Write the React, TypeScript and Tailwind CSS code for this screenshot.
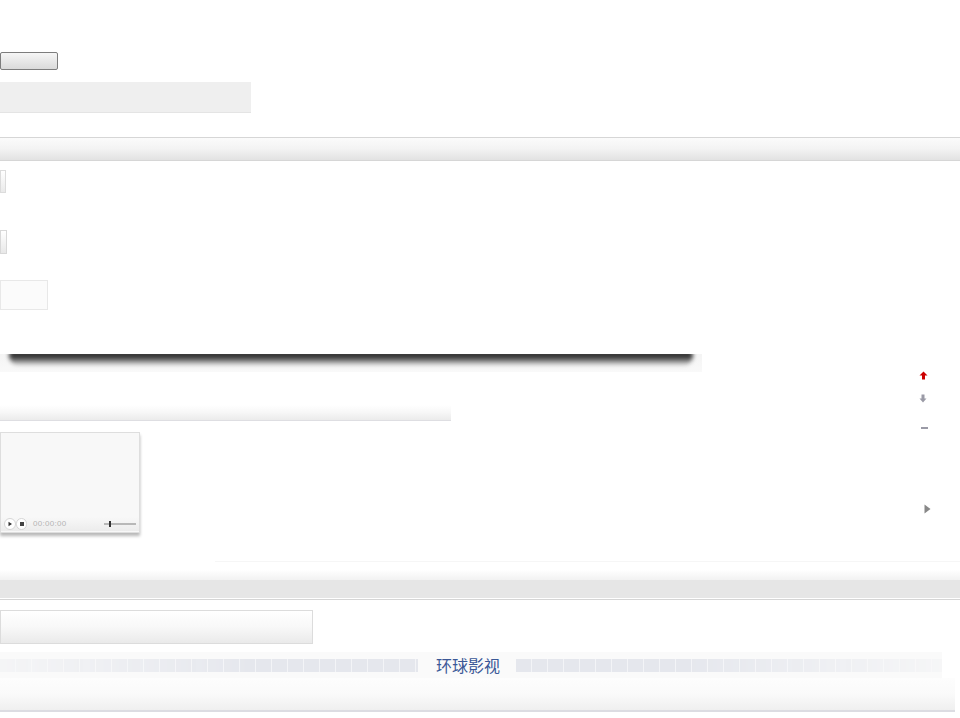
import React from "react";

function Squares({ fade, w }: { fade: "left" | "right"; w: string }) {
  return (
    <div
      className={
        "h-[13px] bg-[repeating-linear-gradient(90deg,#e5e7ed_0_15px,#f3f4f7_15px_16px)] " +
        w +
        " " +
        (fade === "left"
          ? "[mask-image:linear-gradient(90deg,rgba(0,0,0,0.25),#000_60%)]"
          : "[mask-image:linear-gradient(90deg,#000_40%,rgba(0,0,0,0.2))]")
      }
    />
  );
}

export default function App() {
  return (
    <div className="w-[960px] h-[718px] overflow-hidden bg-white font-['Liberation_Sans',sans-serif]">
      <div className="pt-[52px]">
        <div className="h-[18px] w-[58px] rounded-[2px] border border-[#7d7d7d] bg-gradient-to-b from-[#f6f6f6] to-[#dadada]" />
        <div className="mt-[12px] h-[31px] w-[251px] bg-[#efefef] border-b border-[#e4e4e4]" />
        <div className="mt-[24px] h-[24px] border-t border-b border-[#d6d6d6] bg-gradient-to-b from-[#fbfbfb] via-[#f3f3f3] to-[#e2e2e2]" />
        <div className="mt-[9px] h-[23px] w-[6px] border border-[#dcdcdc] bg-gradient-to-b from-[#ffffff] to-[#eaeaea]" />
        <div className="mt-[37px] h-[24px] w-[7px] border border-[#d8d8d8] bg-gradient-to-b from-[#ffffff] to-[#e8e8e8]" />
        <div className="mt-[26px] h-[30px] w-[48px] border border-[#e8e8e8] bg-[#fbfbfb]" />

        <div className="mt-[44px] flex">
          <div className="flex-1">
            <div className="h-[18px] w-[702px] bg-gradient-to-b from-[#f4f4f4] to-[#f9f9f9] overflow-hidden">
              <div className="mx-[9px] mt-[-3px] h-[15px] rounded-b-[12px] rounded-t-[4px] bg-gradient-to-b from-[#1a1a1a] via-[#444] via-45% to-transparent blur-[2px]" />
            </div>
            <div className="mt-[33px] h-[16px] w-[451px] bg-gradient-to-b from-[#ffffff] via-[#f7f7f7] to-[#ebebeb] border-b border-[#dedee2]" />
            <div className="mt-[11px] h-[101px] w-[140px] border border-[#dedede] bg-[#f8f8f8] shadow-[0_3px_3px_rgba(0,0,0,0.28)] flex flex-col justify-end">
              <div className="flex items-center h-[14px] mb-[1px] bg-gradient-to-b from-[#f8f8f8] to-[#ececec]">
                <div className="ml-[3px] w-[12px] h-[12px] rounded-full border border-[#d6d6d6] bg-white flex items-center justify-center">
                  <svg width="6" height="6" viewBox="0 0 6 6"><path d="M1.5 0.8 L5 3 L1.5 5.2 Z" fill="#333" /></svg>
                </div>
                <div className="w-[11px] h-[12px] rounded-full border border-[#d6d6d6] bg-white flex items-center justify-center">
                  <div className="w-[4px] h-[4px] bg-[#444]" />
                </div>
                <span className="ml-[6px] text-[8px] leading-none text-[#b4b4b4] tracking-[0.3px]">00:00:00</span>
                <div className="ml-auto mr-[3px] relative w-[32px] h-[6px] flex items-center">
                  <div className="w-full h-[2px] bg-[#b8b8b8]" />
                  <div className="absolute left-[5px] top-0 w-[2px] h-[6px] bg-[#333]" />
                </div>
              </div>
            </div>
          </div>
          <div className="w-[60px] relative">
            <div className="flex flex-col items-start pl-[19px] pt-[17px]">
              <svg width="9" height="9" viewBox="0 0 9 9"><path d="M4.5 0.5 L8.5 4.5 L6 4.5 L6 8.5 L3 8.5 L3 4.5 L0.5 4.5 Z" fill="#cc0000" /></svg>
              <svg className="mt-[14px]" width="8" height="9" viewBox="0 0 8 9"><path d="M2.5 0.5 L5.5 0.5 L5.5 4.5 L7.5 4.5 L4 8.5 L0.5 4.5 L2.5 4.5 Z" fill="#9a9aa6" /></svg>
              <div className="mt-[24px] ml-[2px] w-[7px] h-[2px] bg-[#9a9aa6]" />
              <svg className="mt-[75px] ml-[5px]" width="7" height="10" viewBox="0 0 7 10"><path d="M0.5 0.5 L6.5 5 L0.5 9.5 Z" fill="#888" /></svg>
            </div>
          </div>
        </div>

        <div className="mt-[28px] ml-[215px] h-px bg-[#f6f6f6]" />
        <div className="mt-[8px] h-[10px] bg-gradient-to-b from-[#ffffff] to-[#f2f2f2]" />
        <div className="h-[18px] bg-[#e6e6e6]" />
        <div className="h-[2px] bg-[#d5d5d5] border-t border-white" />
        <div className="mt-[10px] h-[34px] w-[313px] border border-[#dcdcdc] bg-gradient-to-b from-[#ffffff] via-[#f8f8f8] to-[#eaeaea]" />
        <div className="mt-[8px] h-[26px] w-[942px] bg-[#fafafa] flex items-center">
          <Squares fade="left" w="w-[418px]" />
          <span className="ml-[18px] w-[80px] text-[16px] leading-none text-[#3b5897] font-['Noto_Sans_CJK_SC',sans-serif]">环球影视</span>
          <Squares fade="right" w="flex-1" />
        </div>
        <div className="h-[34px] w-[955px] bg-gradient-to-b from-[#fdfdfd] via-[#fafafa] to-[#efefef] border-b-[2px] border-[#dcdce2]" />
      </div>
    </div>
  );
}
